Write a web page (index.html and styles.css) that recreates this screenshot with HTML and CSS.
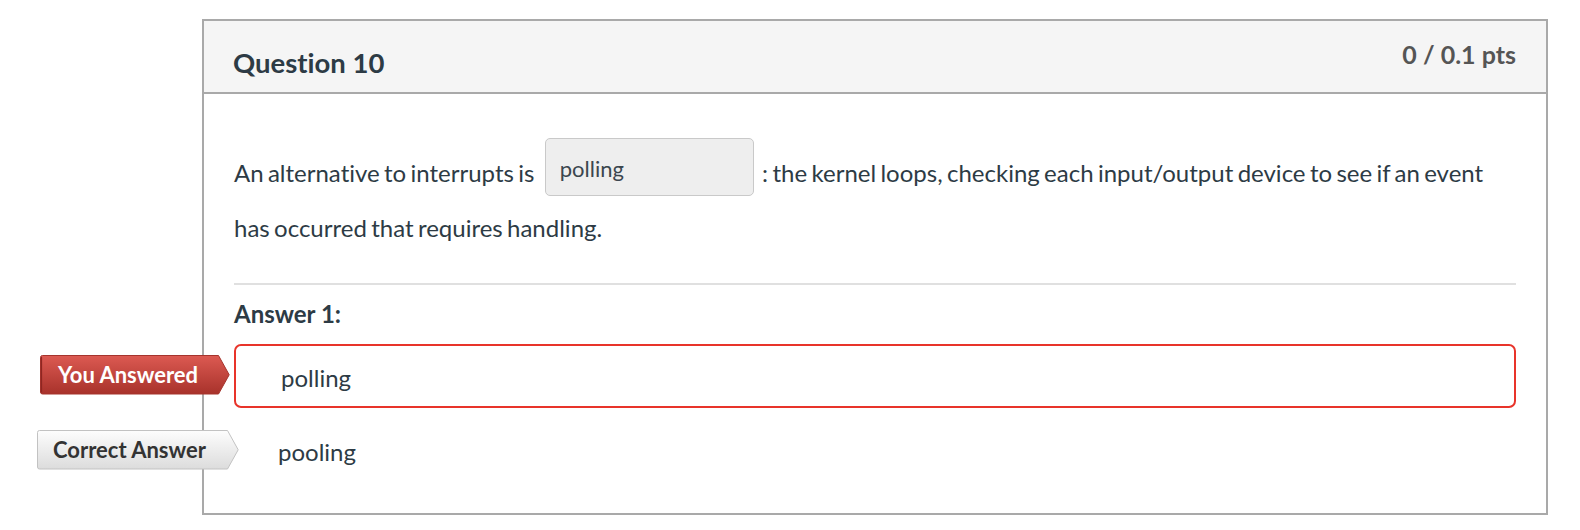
FILE: index.html
```html
<!DOCTYPE html>
<html lang="en">
<head>
<meta charset="utf-8">
<title>Question 10</title>
<link rel="stylesheet" href="styles.css">
</head>
<body>
<div class="card">
  <div class="card-header">
    <h2 class="q-name">Question 10</h2>
    <div class="q-points">0 / 0.1 pts</div>
  </div>
  <div class="card-body">
    <p class="q-text">An alternative to interrupts is <span class="blank">polling</span> : the kernel loops, checking each input/output device to see if an event has occurred that requires handling.</p>
    <div class="divider"></div>
    <div class="answer-label">Answer 1:</div>
    <div class="answer answer-wrong">
      <div class="tag tag-red">
        <svg class="tag-shape" width="190" height="40" viewBox="0 0 190 40" aria-hidden="true">
          <defs>
            <linearGradient id="gRed" x1="0" y1="0" x2="0" y2="1">
              <stop offset="0" stop-color="#dc5a52"/>
              <stop offset="1" stop-color="#a8322b"/>
            </linearGradient>
          </defs>
          <path d="M2.5,0.5 H178.5 L189.2,19.8 L178.5,39 H2.5 Q0.5,39 0.5,37 V2.5 Q0.5,0.5 2.5,0.5 Z" fill="url(#gRed)" stroke="#a5342d" stroke-width="1"/>
          <path d="M1.5,2 V37.5" stroke="#8e2621" stroke-width="1.2"/>
        </svg>
        <span class="tag-text">You Answered</span>
      </div>
      <span class="answer-text">polling</span>
    </div>
    <div class="answer answer-correct">
      <div class="tag tag-grey">
        <svg class="tag-shape" width="202" height="40" viewBox="0 0 202 40" aria-hidden="true">
          <defs>
            <linearGradient id="gGrey" x1="0" y1="0" x2="0" y2="1">
              <stop offset="0" stop-color="#fdfdfd"/>
              <stop offset="1" stop-color="#dcdcdc"/>
            </linearGradient>
          </defs>
          <path d="M2.5,0.5 H190.5 L201.2,19.8 L190.5,39 H2.5 Q0.5,39 0.5,37 V2.5 Q0.5,0.5 2.5,0.5 Z" fill="url(#gGrey)" stroke="#c2c2c2" stroke-width="1"/>
        </svg>
        <span class="tag-text">Correct Answer</span>
      </div>
      <span class="answer-text">pooling</span>
    </div>
  </div>
</div>
</body>
</html>
```

FILE: styles.css
```css
html, body {
  margin: 0;
  padding: 0;
  background: #ffffff;
}

body {
  font-family: Lato, "Open Sans", "Liberation Sans", sans-serif;
  color: #2d3b45;
  font-variant-ligatures: none;
  font-feature-settings: "liga" 0, "clig" 0;
}

.card {
  margin: 19px 0 0 202px;
  width: 1346px;
  box-sizing: border-box;
  border: 2px solid #a9a9a9;
  position: relative;
}

.card-header {
  height: 73px;
  box-sizing: border-box;
  background: #f5f5f5;
  border-bottom: 2px solid #a9a9a9;
  display: flex;
  justify-content: space-between;
  align-items: flex-start;
  padding: 0 30px 0 29px;
}

.q-name {
  margin: 25px 0 0 0;
  font-size: 27.5px;
  line-height: 1.2;
  font-weight: 700;
  color: #2d3b45;
}

.q-points {
  margin-top: 18px;
  font-size: 25px;
  line-height: 1.2;
  font-weight: 700;
  color: #555555;
}

.card-body {
  padding: 0 30px 30px 30px;
}

.q-text {
  margin: 44px 0 0 0;
  font-size: 24px;
  line-height: 55px;
  word-spacing: -1.8px;
}

.blank {
  display: inline-block;
  box-sizing: border-box;
  width: 209px;
  height: 58px;
  padding: 17px 0 0 14px;
  margin: 0 4px 0 6px;
  font-size: 22px;
  line-height: 1.2;
  word-spacing: normal;
  border: 1px solid #c9c9c9;
  border-radius: 5px;
  background: #eeeeee;
  color: #3b464e;
  vertical-align: 5px;
}

.divider {
  margin-top: 28px;
  border-top: 2px solid #e0e0e0;
}

.answer-label {
  margin-top: 15px;
  font-size: 24px;
  line-height: 1.2;
  font-weight: 700;
}

.answer {
  position: relative;
  height: 64px;
  box-sizing: border-box;
  display: flex;
  align-items: center;
  font-size: 24px;
  line-height: 1.2;
}

.answer-wrong {
  margin-top: 15px;
  border: 2px solid #e8342a;
  border-radius: 7px;
  padding-left: 45px;
}

.answer-wrong .answer-text {
  padding-top: 6px;
}

.answer-correct {
  margin-top: 11px;
  border: 2px solid transparent;
  padding-left: 42px;
}

.answer-correct .answer-text {
  padding-top: 4px;
}

.tag {
  position: absolute;
  top: 9px;
  height: 40px;
  display: flex;
  align-items: center;
  font-size: 22px;
  font-weight: 700;
  line-height: 1.2;
}

.tag-red {
  left: -196px;
  width: 190px;
  color: #ffffff;
}

.tag-grey {
  left: -199px;
  width: 202px;
  color: #333333;
}

.tag-shape {
  position: absolute;
  left: 0;
  top: 0;
}

.tag-text {
  position: relative;
  padding-left: 18px;
}

.tag-grey .tag-text {
  padding-left: 16px;
}
```
